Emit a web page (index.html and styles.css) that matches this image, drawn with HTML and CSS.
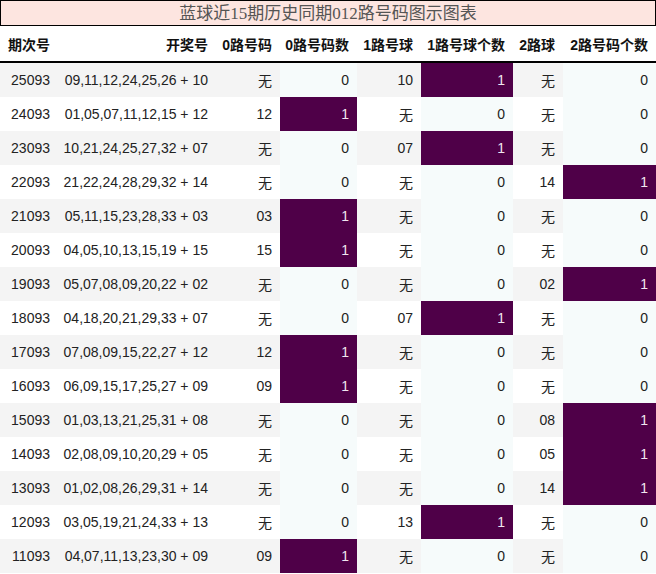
FILE: index.html
```html
<!DOCTYPE html>
<html lang="zh">
<head>
<meta charset="utf-8">
<title>蓝球近15期历史同期012路号码图示图表</title>
<link rel="stylesheet" href="styles.css">
</head>
<body>
<div class="title">蓝球近15期历史同期012路号码图示图表</div>
<table class="chart">
  <colgroup>
    <col class="c1"><col class="c2"><col class="c3"><col class="c4"><col class="c5"><col class="c6"><col class="c7"><col class="c8">
  </colgroup>
  <thead>
    <tr><th>期次号</th><th>开奖号</th><th>0路号码</th><th>0路号码数</th><th>1路号球</th><th>1路号球个数</th><th>2路球</th><th>2路号码个数</th></tr>
  </thead>
  <tbody>
    <tr><td>25093</td><td>09,11,12,24,25,26 + 10</td><td>无</td><td class="cnt">0</td><td>10</td><td class="cnt hit">1</td><td>无</td><td class="cnt">0</td></tr>
    <tr><td>24093</td><td>01,05,07,11,12,15 + 12</td><td>12</td><td class="cnt hit">1</td><td>无</td><td class="cnt">0</td><td>无</td><td class="cnt">0</td></tr>
    <tr><td>23093</td><td>10,21,24,25,27,32 + 07</td><td>无</td><td class="cnt">0</td><td>07</td><td class="cnt hit">1</td><td>无</td><td class="cnt">0</td></tr>
    <tr><td>22093</td><td>21,22,24,28,29,32 + 14</td><td>无</td><td class="cnt">0</td><td>无</td><td class="cnt">0</td><td>14</td><td class="cnt hit">1</td></tr>
    <tr><td>21093</td><td>05,11,15,23,28,33 + 03</td><td>03</td><td class="cnt hit">1</td><td>无</td><td class="cnt">0</td><td>无</td><td class="cnt">0</td></tr>
    <tr><td>20093</td><td>04,05,10,13,15,19 + 15</td><td>15</td><td class="cnt hit">1</td><td>无</td><td class="cnt">0</td><td>无</td><td class="cnt">0</td></tr>
    <tr><td>19093</td><td>05,07,08,09,20,22 + 02</td><td>无</td><td class="cnt">0</td><td>无</td><td class="cnt">0</td><td>02</td><td class="cnt hit">1</td></tr>
    <tr><td>18093</td><td>04,18,20,21,29,33 + 07</td><td>无</td><td class="cnt">0</td><td>07</td><td class="cnt hit">1</td><td>无</td><td class="cnt">0</td></tr>
    <tr><td>17093</td><td>07,08,09,15,22,27 + 12</td><td>12</td><td class="cnt hit">1</td><td>无</td><td class="cnt">0</td><td>无</td><td class="cnt">0</td></tr>
    <tr><td>16093</td><td>06,09,15,17,25,27 + 09</td><td>09</td><td class="cnt hit">1</td><td>无</td><td class="cnt">0</td><td>无</td><td class="cnt">0</td></tr>
    <tr><td>15093</td><td>01,03,13,21,25,31 + 08</td><td>无</td><td class="cnt">0</td><td>无</td><td class="cnt">0</td><td>08</td><td class="cnt hit">1</td></tr>
    <tr><td>14093</td><td>02,08,09,10,20,29 + 05</td><td>无</td><td class="cnt">0</td><td>无</td><td class="cnt">0</td><td>05</td><td class="cnt hit">1</td></tr>
    <tr><td>13093</td><td>01,02,08,26,29,31 + 14</td><td>无</td><td class="cnt">0</td><td>无</td><td class="cnt">0</td><td>14</td><td class="cnt hit">1</td></tr>
    <tr><td>12093</td><td>03,05,19,21,24,33 + 13</td><td>无</td><td class="cnt">0</td><td>13</td><td class="cnt hit">1</td><td>无</td><td class="cnt">0</td></tr>
    <tr><td>11093</td><td>04,07,11,13,23,30 + 09</td><td>09</td><td class="cnt hit">1</td><td>无</td><td class="cnt">0</td><td>无</td><td class="cnt">0</td></tr>
  </tbody>
</table>
</body>
</html>
```
FILE: styles.css
```css
html, body {
  margin: 0;
  padding: 0;
  background: #ffffff;
}

body {
  width: 656px;
  font-family: "Liberation Sans", "Noto Sans CJK SC", sans-serif;
  color: #222222;
}

.title {
  box-sizing: border-box;
  height: 26px;
  border: 1px solid #000000;
  background: #fde5e0;
  color: #555555;
  font-family: "Liberation Serif", "Noto Sans CJK SC", serif;
  font-size: 17px;
  line-height: 25px;
  text-align: center;
}

.chart {
  width: 656px;
  table-layout: fixed;
  border-collapse: collapse;
  border-spacing: 0;
  font-size: 14px;
}

.c1 { width: 58px; }
.c2 { width: 158px; }
.c3 { width: 64px; }
.c4 { width: 77px; }
.c5 { width: 64px; }
.c6 { width: 92px; }
.c7 { width: 50px; }
.c8 { width: 93px; }

.chart th,
.chart td {
  padding: 0 8px 0 0;
  text-align: right;
  white-space: nowrap;
  overflow: hidden;
}

.chart th {
  height: 35px;
  font-weight: bold;
  color: #111111;
  background: #ffffff;
  border-bottom: 2px solid #000000;
}

.chart td {
  height: 34px;
}

.chart tbody tr:nth-child(odd) td {
  background: #f4f4f4;
}

.chart tbody tr:nth-child(even) td {
  background: #ffffff;
}

.chart tbody tr td.cnt {
  background: #f6fbfb;
}

.chart tbody tr td.hit {
  background: #4f0048;
  color: #f0e6f0;
}
```
